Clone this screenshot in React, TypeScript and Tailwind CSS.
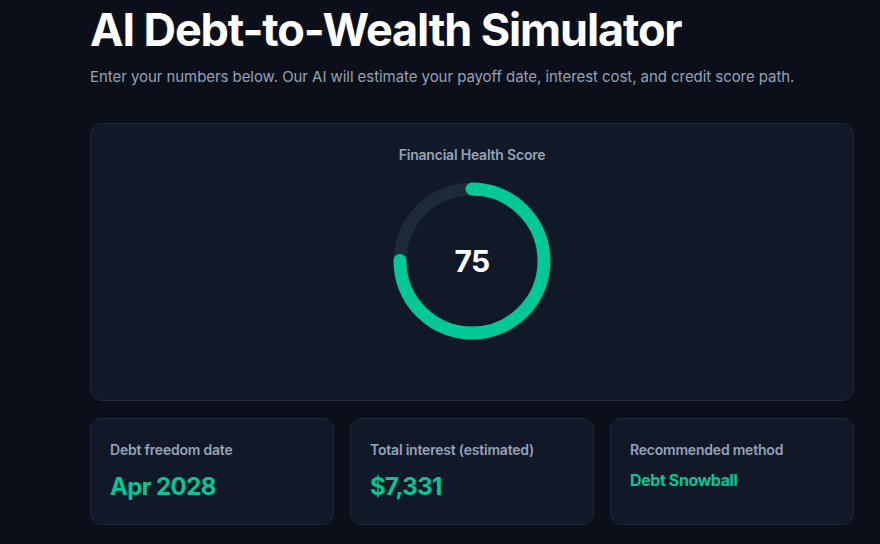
import React from "react"

const font = { fontFamily: "Inter, 'Noto Sans', sans-serif" }

function ScoreRing({ score }: { score: number }) {
  const r = 72
  const c = 2 * Math.PI * r
  const offset = c * (1 - score / 100)
  return (
    <div className="relative w-[160px] h-[160px]">
      <svg width="160" height="160" viewBox="0 0 160 160" className="-rotate-90">
        <circle cx="80" cy="80" r={r} fill="none" stroke="#1e293b" strokeWidth="13" />
        <circle
          cx="80"
          cy="80"
          r={r}
          fill="none"
          stroke="#00c896"
          strokeWidth="13"
          strokeLinecap="round"
          strokeDasharray={c}
          strokeDashoffset={offset}
        />
      </svg>
      <div className="absolute inset-0 flex items-center justify-center">
        <span className="text-3xl font-bold tracking-tight text-white">{score}</span>
      </div>
    </div>
  )
}

function StatCard({ label, value, small }: { label: string; value: string; small?: boolean }) {
  return (
    <div className="h-[107px] rounded-xl border border-[#1f2937] bg-[#111827] px-[19px] pt-[21px]">
      <div className="text-sm font-semibold tracking-[-0.015em] text-[#94a3b8]">{label}</div>
      {small ? (
        <div className="mt-2 text-base font-bold tracking-tight text-[#00c896]">{value}</div>
      ) : (
        <div className="mt-[11px] text-2xl font-bold tracking-tight text-[#00c896]">{value}</div>
      )}
    </div>
  )
}

export default function App() {
  return (
    <div className="min-h-screen bg-[#0a0f1a] pl-[90px] pt-[7px]" style={font}>
      <div className="w-[764px]">
        {/* Header */}
        <h1 className="text-[45px] leading-none font-bold tracking-tight text-white">AI Debt-to-Wealth Simulator</h1>
        <p className="mt-[14px] text-[15px] leading-[22px] tracking-[-0.004em] text-[#94a3b8]">
          Enter your numbers below. Our AI will estimate your payoff date, interest cost, and credit score path.
        </p>

        {/* Score card */}
        <div className="mt-[35px] h-[278px] rounded-xl border border-[#1f2937] bg-[#111827] pt-[21px] flex flex-col items-center">
          <div className="text-sm font-semibold tracking-[-0.015em] text-[#94a3b8]">Financial Health Score</div>
          <div className="mt-4">
            <ScoreRing score={75} />
          </div>
        </div>

        {/* Stats */}
        <div className="mt-[17px] grid grid-cols-3 gap-4">
          <StatCard label="Debt freedom date" value="Apr 2028" />
          <StatCard label="Total interest (estimated)" value="$7,331" />
          <StatCard label="Recommended method" value="Debt Snowball" small />
        </div>
      </div>
    </div>
  )
}
